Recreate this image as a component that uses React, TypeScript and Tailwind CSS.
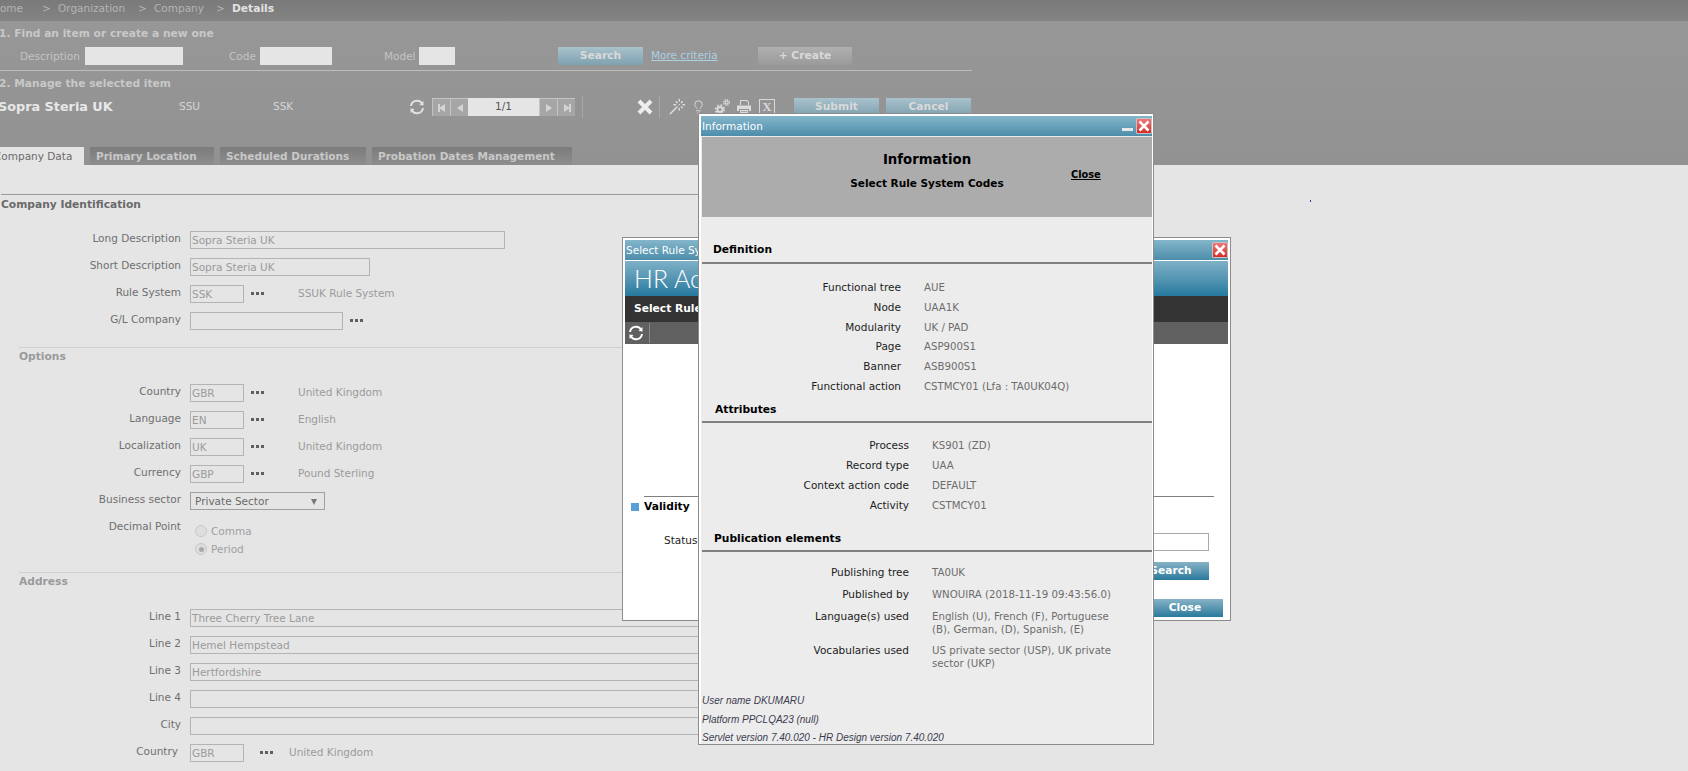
import { Lightbulb, Wand } from "lucide-react";

function Refresh({ className }: { className: string }) {
  return (
    <svg viewBox="0 0 16 16" className={className} fill="none" stroke="currentColor" strokeWidth="2">
      <path d="M2 7 A6 6 0 0 1 13 4.5" />
      <path d="M14 9 A6 6 0 0 1 3 11.5" />
      <path d="M14.5 2 L14.5 6.5 L10.5 6 Z M1.5 14 L1.5 9.5 L5.5 10 Z" fill="currentColor" stroke="none" />
    </svg>
  );
}

function CloseBox() {
  return (
    <span className="flex h-[16px] w-[16px] items-center justify-center rounded-[1px] border border-[#c4c4c4] bg-gradient-to-b from-[#f07575] to-[#d42a2a]">
      <svg viewBox="0 0 12 12" className="h-[12px] w-[12px]" stroke="white" strokeWidth="2.6">
        <path d="M1.5 1.5 L10.5 10.5 M10.5 1.5 L1.5 10.5" />
      </svg>
    </span>
  );
}

function Dots() {
  return (
    <span className="mb-[1px] flex w-[13px] gap-[2px]">
      <i className="h-[3px] w-[3px] bg-[#5f5f5f]" />
      <i className="h-[3px] w-[3px] bg-[#5f5f5f]" />
      <i className="h-[3px] w-[3px] bg-[#5f5f5f]" />
    </span>
  );
}

function Box({ value = "", width }: { value?: string; width: string }) {
  return (
    <span className={`flex h-[18px] shrink-0 items-center border border-[#b4b4b4] pl-[1px] pt-[2px] text-[10.5px] text-[#9b9b9b] ${width}`}>
      {value}
    </span>
  );
}

function Row({ label, children, labelWidth = "w-[181px]" }: { label: string; children?: React.ReactNode; labelWidth?: string }) {
  return (
    <div className="flex h-[27px] items-start">
      <span className={`shrink-0 text-right text-[10.5px] leading-[14px] text-[#6f6f6f] ${labelWidth}`}>{label}</span>
      <div className="ml-[9px] flex items-center">{children}</div>
    </div>
  );
}

function Lookup({ label, code, text }: { label: string; code: string; text: string }) {
  return (
    <Row label={label}>
      <Box value={code} width="w-[54px]" />
      <span className="ml-[7px]"><Dots /></span>
      <span className="ml-[34px] text-[10.5px] text-[#9b9b9b]">{text}</span>
    </Row>
  );
}

function HeadButton({ label, width, gray }: { label: string; width: string; gray?: boolean }) {
  return (
    <span className={`flex h-[18px] items-center justify-center pt-[1px] text-[10.7px] font-bold text-[#d9d9d9] ${width} ${gray ? "bg-gradient-to-b from-[#b0b0b0] to-[#9a9a9a]" : "bg-gradient-to-b from-[#a9c2cc] to-[#7fa1b0]"}`}>
      {label}
    </span>
  );
}

function Tab({ label, width }: { label: string; width: string }) {
  return (
    <span className={`flex h-[18px] items-center bg-gradient-to-b from-[#7c7c7c] to-[#8e8e8e] pl-[6px] pt-[1px] text-[10.5px] font-bold text-[#c8c8c8] ${width}`}>
      {label}
    </span>
  );
}

function PagerButton({ dir }: { dir: "first" | "prev" | "next" | "last" }) {
  return (
    <span className="flex h-[18px] w-[18px] items-center justify-center border-l border-t border-[#c4c4c4] bg-[#a6a6a6]">
      <svg viewBox="0 0 10 10" className={`h-[10px] w-[10px] text-[#d4d4d4] ${dir === "next" || dir === "last" ? "rotate-180" : ""}`} fill="currentColor">
        <path d="M8 1 L8 9 L2 5 Z" />
        {(dir === "first" || dir === "last") && <rect x="1" y="1" width="2" height="8" />}
      </svg>
    </span>
  );
}

function Gears() {
  return (
    <svg viewBox="0 0 16 16" className="h-[16px] w-[16px] text-[#dcdcdc]" fill="none" stroke="currentColor">
      <circle cx="6" cy="10.5" r="2.6" strokeWidth="2" />
      <circle cx="6" cy="10.5" r="4.4" strokeWidth="1.6" strokeDasharray="1.8 1.65" />
      <circle cx="12.5" cy="3.5" r="1.6" strokeWidth="1.2" />
      <circle cx="12.5" cy="3.5" r="2.9" strokeWidth="1.2" strokeDasharray="1.2 1.1" />
    </svg>
  );
}

function PrinterIcon() {
  return (
    <svg viewBox="0 0 16 16" className="h-[16px] w-[16px] text-[#dcdcdc]" fill="currentColor">
      <path d="M4 1 H11 L13 3 V6 H12 V3.5 L10.5 2 H5 V6 H4 Z" />
      <path d="M1 6.5 H15 V12 H13 V10 H3 V12 H1 Z" />
      <path d="M4 11 H12 V15 H4 Z M5 12 V12.8 H11 V12 Z" fillRule="evenodd" />
    </svg>
  );
}

function InfoRow({ label, value, labelWidth }: { label: string; value: React.ReactNode; labelWidth: string }) {
  return (
    <div className="flex items-start">
      <span className={`shrink-0 text-right text-[#1d1d1d] ${labelWidth}`}>{label}</span>
      <span className="ml-[23px] w-[196px] pt-[1px] text-[10.2px] leading-[13px] text-[#6c6c6c]">{value}</span>
    </div>
  );
}

function InfoTitle({ label, left, top, gap }: { label: string; left: string; top: string; gap: string }) {
  return (
    <div className={top}>
      <div className={`text-[10.7px] font-bold leading-[14px] text-black ${left}`}>{label}</div>
      <div className={`h-[2px] bg-[#808080] ${gap}`} />
    </div>
  );
}

function SelectWindow() {
  return (
    <div className="absolute left-[622px] top-[237px] flex h-[384px] w-[609px] flex-col border border-[#8c8c8c] bg-white p-[2px] text-black">
      <div className="flex h-[20px] shrink-0 items-center justify-between bg-gradient-to-b from-[#83b6cb] to-[#4d8dab] pl-[1px] text-[10.5px] text-white">
        <span className="pt-[2px]">Select Rule System Codes</span>
        <CloseBox />
      </div>
      <div className="mt-[1px] flex h-[35px] shrink-0 items-center bg-gradient-to-b from-[#7eb1c7] to-[#237a9f] pl-[9px] pt-[1px] font-['Lato'] text-[25px] font-light text-white">
        HR Access
      </div>
      <div className="flex h-[26px] shrink-0 items-center bg-[#333333] pl-[9px] text-[10.7px] font-bold text-white">Select Rule System Codes</div>
      <div className="flex h-[22px] shrink-0 items-center bg-[#606060] pl-[3px] text-white">
        <Refresh className="h-[16px] w-[16px]" />
        <i className="ml-[5px] h-[20px] w-px bg-[#8a8a8a]" />
      </div>
      <div className="mt-[152px] ml-[19px] mr-[14px] h-px shrink-0 bg-[#808080]" />
      <div className="mt-[5px] flex items-center pl-[6px] text-[10.7px] font-bold leading-[10px]">
        <i className="h-[8px] w-[8px] bg-[#5b9fd8]" />
        <span className="ml-[5px]">Validity</span>
      </div>
      <div className="mt-[21px] flex items-start justify-between pl-[39px] pr-[19px] text-[10.5px]">
        <span className="mt-[-1px] leading-[16px] text-[#1d1d1d]">Status</span>
        <span className="h-[18px] w-[100px] border border-[#aaaaaa]" />
      </div>
      <div className="mt-[11px] flex justify-end pr-[19px]">
        <span className="flex h-[18px] w-[76px] items-center justify-center bg-gradient-to-b from-[#86b3c6] to-[#26799c] text-[10.7px] font-bold text-white">Search</span>
      </div>
      <div className="mt-[19px] flex justify-end pr-[5px]">
        <span className="flex h-[18px] w-[76px] items-center justify-center bg-gradient-to-b from-[#86b3c6] to-[#26799c] text-[10.7px] font-bold text-white">Close</span>
      </div>
    </div>
  );
}

function InfoWindow() {
  return (
    <div className="absolute left-[698px] top-[113px] flex h-[632px] w-[456px] flex-col border border-[#8c8c8c] bg-white p-[2px] pr-[1px] pb-0">
      <div className="flex h-[20px] shrink-0 items-center justify-between bg-gradient-to-b from-[#83b6cb] to-[#4d8dab] pl-[1px] text-[10.5px] text-white">
        <span className="pt-[2px]">Information</span>
        <span className="flex items-center gap-[3px]">
          <i className="mt-[6px] h-[3px] w-[11px] bg-[#e8e8e8]" />
          <CloseBox />
        </span>
      </div>
      <div className="flex min-h-0 flex-1 flex-col bg-[#ececec] pl-[1px] text-[10.5px]">
        <div className="relative mt-[1px] flex h-[80px] shrink-0 flex-col items-center bg-[#acacac] font-bold text-black">
          <div className="mt-[14px] text-[13.3px] leading-[18px]">Information</div>
          <div className="mt-[6px] text-[10.5px] leading-[16px]">Select Rule System Codes</div>
          <span className="absolute left-[369px] top-[31px] text-[9.8px] leading-[14px] underline">Close</span>
        </div>
        <InfoTitle label="Definition" left="ml-[11px]" top="mt-[26px]" gap="mt-[5px]" />
        <div className="mt-[16px] flex flex-col gap-[4.8px] leading-[15px]">
          <InfoRow labelWidth="w-[199px]" label="Functional tree" value="AUE" />
          <InfoRow labelWidth="w-[199px]" label="Node" value="UAA1K" />
          <InfoRow labelWidth="w-[199px]" label="Modularity" value="UK / PAD" />
          <InfoRow labelWidth="w-[199px]" label="Page" value="ASP900S1" />
          <InfoRow labelWidth="w-[199px]" label="Banner" value="ASB900S1" />
          <InfoRow labelWidth="w-[199px]" label="Functional action" value="CSTMCY01 (Lfa : TA0UK04Q)" />
        </div>
        <InfoTitle label="Attributes" left="ml-[13px]" top="mt-[9px]" gap="mt-[4px]" />
        <div className="mt-[15px] flex flex-col gap-[5px] leading-[15px]">
          <InfoRow labelWidth="w-[207px]" label="Process" value="KS901 (ZD)" />
          <InfoRow labelWidth="w-[207px]" label="Record type" value="UAA" />
          <InfoRow labelWidth="w-[207px]" label="Context action code" value="DEFAULT" />
          <InfoRow labelWidth="w-[207px]" label="Activity" value="CSTMCY01" />
        </div>
        <InfoTitle label="Publication elements" left="ml-[12px]" top="mt-[19px]" gap="mt-[4px]" />
        <div className="mt-[13px] flex flex-col gap-[7px] leading-[15px]">
          <InfoRow labelWidth="w-[207px]" label="Publishing tree" value="TA0UK" />
          <InfoRow labelWidth="w-[207px]" label="Published by" value="WNOUIRA (2018-11-19 09:43:56.0)" />
          <InfoRow labelWidth="w-[207px]" label="Language(s) used" value="English (U), French (F), Portuguese (B), German, (D), Spanish, (E)" />
          <InfoRow labelWidth="w-[207px]" label="Vocabularies used" value="US private sector (USP), UK private sector (UKP)" />
        </div>
        <div className="mt-auto mb-0 flex flex-col gap-[5.5px] font-['Liberation_Sans'] text-[10px] italic leading-[13px] text-[#3c3c50]">
          <span>User name DKUMARU</span>
          <span>Platform PPCLQA23 (null)</span>
          <span>Servlet version 7.40.020 - HR Design version 7.40.020</span>
        </div>
      </div>
    </div>
  );
}

export default function App() {
  return (
    <div className="relative h-[771px] w-[1688px] overflow-hidden bg-[#e5e5e5] font-['DejaVu_Sans',sans-serif]">
      <div className="h-[165px] bg-gradient-to-b from-[#989898] to-[#929292]">
        <div className="flex h-[21px] items-center bg-gradient-to-b from-[#7a7a7a] to-[#838383] pb-[3px] text-[10.5px] text-[#b4b4b4]">
          <span className="ml-[-8px] w-[50px] shrink-0">Home</span>
          <span className="w-[16px]">&gt;</span>
          <span className="w-[80px]">Organization</span>
          <span className="w-[16px]">&gt;</span>
          <span className="w-[62px]">Company</span>
          <span className="w-[16px]">&gt;</span>
          <span className="text-[10.7px] font-bold text-[#e2e2e2]">Details</span>
        </div>
        <div className="mt-[6px] ml-[-1px] text-[10.7px] font-bold leading-[14px] text-[#c8c8c8]">1. Find an item or create a new one</div>
        <div className="mt-[6px] flex h-[18px] w-[972px] items-center text-[10.5px] text-[#c4c4c4]">
          <span className="ml-[20px] w-[65px] pt-[2px]">Description</span>
          <span className="h-[18px] w-[98px] bg-[#e5e5e5]" />
          <span className="ml-[46px] w-[31px] pt-[2px]">Code</span>
          <span className="h-[18px] w-[72px] bg-[#e5e5e5]" />
          <span className="ml-[52px] w-[35px] pt-[2px]">Model</span>
          <span className="h-[18px] w-[36px] bg-[#e5e5e5]" />
          <span className="ml-[103px]"><HeadButton label="Search" width="w-[85px]" /></span>
          <span className="ml-[8px] w-[107px] text-[#aad0e2] underline">More criteria</span>
          <HeadButton label="+ Create" width="w-[94px]" gray />
        </div>
        <div className="mt-[5px] h-px w-[972px] bg-[#bcbcbc]" />
        <div className="mt-[6px] ml-[-1px] text-[10.7px] font-bold leading-[14px] text-[#c8c8c8]">2. Manage the selected item</div>
        <div className="mt-[7px] flex h-[18px] items-center text-[10.5px] text-[#d6d6d6]">
          <span className="ml-[-2px] w-[181px] shrink-0 text-[12.8px] font-bold text-[#e8e8e8]">Sopra Steria UK</span>
          <span className="w-[94px]">SSU</span>
          <span className="w-[136px]">SSK</span>
          <Refresh className="h-[16px] w-[16px] text-[#e2e2e2]" />
          <span className="ml-[7px] flex">
            <PagerButton dir="first" />
            <PagerButton dir="prev" />
            <span className="flex h-[18px] w-[71px] items-center justify-center bg-[#e5e5e5] text-[#555555]">1/1</span>
            <PagerButton dir="next" />
            <PagerButton dir="last" />
          </span>
          <i className="ml-[7px] h-[22px] w-px bg-[#a8a8a8]" />
          <svg viewBox="0 0 16 16" className="ml-[54px] h-[16px] w-[16px] text-[#ededed]" stroke="currentColor" strokeWidth="4">
            <path d="M2 2 L14 14 M14 2 L2 14" />
          </svg>
          <i className="ml-[6px] h-[22px] w-px bg-[#a8a8a8]" />
          <Wand className="ml-[8px] h-[18px] w-[18px] text-[#e2e2e2]" strokeWidth={1.8} />
          <Lightbulb className="ml-[5px] h-[20px] w-[15px] text-[#e2e2e2]" strokeWidth={1.4} />
          <span className="ml-[8px]"><Gears /></span>
          <span className="ml-[6px]"><PrinterIcon /></span>
          <span className="ml-[7px] flex h-[16px] w-[16px] items-center justify-center border border-[#d8d8d8] font-['Liberation_Serif'] text-[13px] font-bold text-[#d8d8d8]">X</span>
          <span className="ml-[19px]"><HeadButton label="Submit" width="w-[85px]" /></span>
          <span className="ml-[7px]"><HeadButton label="Cancel" width="w-[85px]" /></span>
        </div>
        <div className="mt-[31px] flex gap-[6px]">
          <span className="ml-[-6px] flex h-[18px] w-[90px] shrink-0 items-center bg-[#e5e5e5] pt-[1px] text-[10.5px] text-[#6a6a6a]">Company Data</span>
          <Tab label="Primary Location" width="w-[124px]" />
          <Tab label="Scheduled Durations" width="w-[146px]" />
          <Tab label="Probation Dates Management" width="w-[200px]" />
        </div>
      </div>

      <div className="mt-[29px] w-[720px]">
        <div className="ml-[1px] h-px bg-[#9a9a9a]" />
        <div className="ml-[1px] mt-[2px] text-[10.7px] font-bold leading-[16px] text-[#6a6a6a]">Company Identification</div>
        <div className="mt-[18px]">
          <Row label="Long Description"><Box value="Sopra Steria UK" width="w-[315px]" /></Row>
          <Row label="Short Description"><Box value="Sopra Steria UK" width="w-[180px]" /></Row>
          <Lookup label="Rule System" code="SSK" text="SSUK Rule System" />
          <Row label="G/L Company">
            <Box width="w-[153px]" />
            <span className="ml-[7px]"><Dots /></span>
          </Row>
        </div>
        <div className="ml-[19px] mt-[8px] h-px bg-[#d0d0d0]" />
        <div className="ml-[19px] mt-[1px] text-[10.7px] font-bold leading-[16px] text-[#9a9a9a]">Options</div>
        <div className="mt-[19px]">
          <Lookup label="Country" code="GBR" text="United Kingdom" />
          <Lookup label="Language" code="EN" text="English" />
          <Lookup label="Localization" code="UK" text="United Kingdom" />
          <Lookup label="Currency" code="GBP" text="Pound Sterling" />
          <Row label="Business sector">
            <span className="flex h-[18px] w-[135px] items-center justify-between border border-[#a0a0a0] pl-[4px] pr-[7px] pt-[1px] text-[10.5px] text-[#6a6a6a]">
              Private Sector
              <i className="h-0 w-0 border-x-[3px] border-t-[6px] border-x-transparent border-t-[#777777]" />
            </span>
          </Row>
          <Row label="Decimal Point">
            <div className="ml-[5px] flex flex-col pt-[1px] text-[10.5px] leading-[18px] text-[#a0a0a0]">
              <span className="flex items-center gap-[4px] pt-[2px]">
                <i className="h-[12px] w-[12px] rounded-full border border-[#c8c8c8] bg-[#dedede]" />
                Comma
              </span>
              <span className="flex items-center gap-[4px]">
                <i className="flex h-[12px] w-[12px] items-center justify-center rounded-full border border-[#c8c8c8] bg-[#dedede]">
                  <b className="h-[5px] w-[5px] rounded-full bg-[#a8a8a8]" />
                </i>
                Period
              </span>
            </div>
          </Row>
        </div>
        <div className="ml-[19px] mt-[26px] h-px bg-[#d0d0d0]" />
        <div className="ml-[19px] mt-[1px] text-[10.7px] font-bold leading-[16px] text-[#9a9a9a]">Address</div>
        <div className="mt-[19px]">
          <Row label="Line 1"><Box value="Three Cherry Tree Lane" width="w-[525px]" /></Row>
          <Row label="Line 2"><Box value="Hemel Hempstead" width="w-[525px]" /></Row>
          <Row label="Line 3"><Box value="Hertfordshire" width="w-[525px]" /></Row>
          <Row label="Line 4"><Box width="w-[525px]" /></Row>
          <Row label="City"><Box width="w-[525px]" /></Row>
          <Row label="Country" labelWidth="w-[178px]">
            <span className="ml-[3px] flex items-center">
              <Box value="GBR" width="w-[54px]" />
              <span className="ml-[16px]"><Dots /></span>
              <span className="ml-[16px] text-[10.5px] text-[#9b9b9b]">United Kingdom</span>
            </span>
          </Row>
        </div>
      </div>

      <SelectWindow />
      <InfoWindow />
      <i className="absolute left-[1310px] top-[200px] h-[2px] w-px bg-[#3a3a8c]" />
    </div>
  );
}
